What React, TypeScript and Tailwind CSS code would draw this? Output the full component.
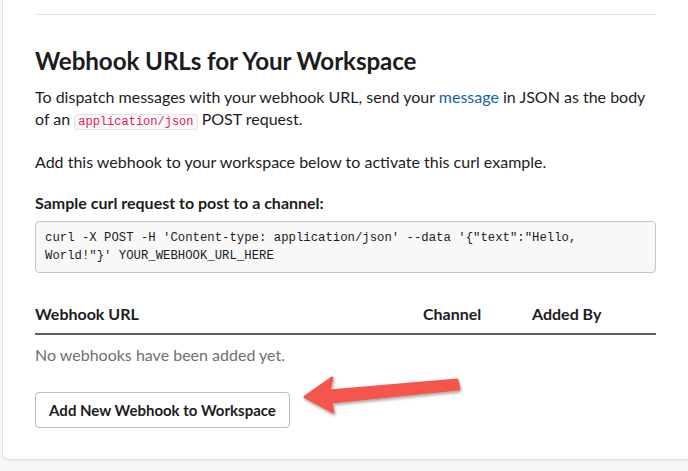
import React from "react";

export default function App() {
  return (
    <div
      className="relative h-[471px] w-[688px] overflow-hidden bg-[#f7f7f7] pl-[2px]"
      style={{ fontFamily: "Lato, 'Noto Sans', sans-serif" }}
    >
      <div className="w-[720px] rounded-bl-md border-b border-l border-[#dedede] bg-white pb-[31px] pl-[32px] pt-[14px] text-[#1d1c1d] shadow-[0_1px_2px_rgba(0,0,0,0.04)]">
        <div className="w-[621px]">
          <div className="h-px bg-[#e2e2e2]" />
          <h2 className="mt-[31px] text-[24.2px] font-bold leading-[30px] tracking-[-0.1px]">
            Webhook URLs for Your Workspace
          </h2>
          <p className="mt-[10px] text-[16px] leading-[22px]">
            To dispatch messages with your webhook URL, send your{" "}
            <span className="text-[#1264a3]">message</span> in JSON as the body
            <br />
            of an{" "}
            <code
              className="rounded-[3px] border border-[#e3e3e3] bg-[#f8f8f8] px-[3px] text-[12px] text-[#e01e5a]"
              style={{ fontFamily: "'Liberation Mono', monospace" }}
            >
              application/json
            </code>{" "}
            POST request.
          </p>
          <p className="mt-[18px] text-[16px] leading-[22px]">
            Add this webhook to your workspace below to activate this curl example.
          </p>
          <p className="mt-[19px] text-[16px] font-bold leading-[22px]">
            Sample curl request to post to a channel:
          </p>
          <div
            className="mt-[7px] rounded-[4px] border border-[#c4c4c4] bg-[#f8f8f8] py-[7px] pl-[9px] text-[12.3px] leading-[18px] text-[#1d1c1d]"
            style={{ fontFamily: "'Liberation Mono', monospace" }}
          >
            curl -X POST -H 'Content-type: application/json' --data '{"{"}"text":"Hello,
            <br />
            World!"{"}"}' YOUR_WEBHOOK_URL_HERE
          </div>
          <div className="mt-[30px] grid grid-cols-[388px_109px_1fr] border-b-2 border-[#616061] pb-[8px] text-[16px] font-bold leading-[22px]">
            <div>Webhook URL</div>
            <div>Channel</div>
            <div>Added By</div>
          </div>
          <p className="mt-[9px] text-[16px] leading-[22px] text-[#707070]">
            No webhooks have been added yet.
          </p>
          <button className="mt-[26px] h-[36px] w-[255px] rounded-[4px] border border-[#bcbcbc] bg-white text-[15px] font-bold text-[#1d1c1d]">
            Add New Webhook to Workspace
          </button>
        </div>
      </div>
      <svg
        className="absolute left-[295px] top-[364px]"
        width="180"
        height="60"
        viewBox="0 0 180 60"
      >
        <defs>
          <filter id="sh" x="-20%" y="-40%" width="140%" height="180%">
            <feDropShadow dx="1" dy="2" stdDeviation="1.6" floodColor="#000" floodOpacity="0.35" />
          </filter>
        </defs>
        <polygon
          points="10,33 37,14 34,27 162,16 164,25 36,38 38,48"
          fill="#f4574b"
          stroke="#f4574b"
          strokeWidth="3"
          strokeLinejoin="round"
          filter="url(#sh)"
        />
      </svg>
    </div>
  );
}
